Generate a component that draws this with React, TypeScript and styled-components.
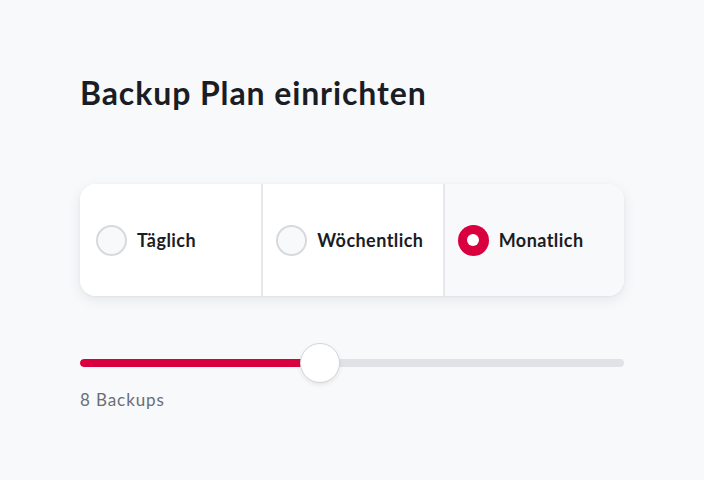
import styled, { createGlobalStyle } from "styled-components";
import { useState } from "react";

const GlobalStyle = createGlobalStyle`
  html, body {
    margin: 0;
    padding: 0;
    background: #f8f9fb;
    font-family: Lato, "Noto Sans", sans-serif;
  }
`;

const Page = styled.div`
  width: 704px;
  height: 480px;
  box-sizing: border-box;
  padding: 72px 80px 0;
  display: flex;
  flex-direction: column;
`;

const Title = styled.h1`
  margin: 0;
  font-size: 32px;
  line-height: 42px;
  font-weight: 700;
  color: #1b1d24;
  letter-spacing: 0.9px;
`;

const Options = styled.div`
  margin-top: 70px;
  height: 112px;
  display: grid;
  grid-template-columns: repeat(3, 1fr);
  background: #ffffff;
  border-radius: 16px;
  box-shadow: 0 4px 14px rgba(20, 24, 40, 0.08), 0 1px 3px rgba(20, 24, 40, 0.05);
  overflow: hidden;
`;

const Option = styled.label<{ $active: boolean; $first: boolean }>`
  display: flex;
  align-items: center;
  gap: 10px;
  padding-left: ${(p) => (p.$first ? "16px" : "13px")};
  cursor: pointer;
  background: ${(p) => (p.$active ? "#f8f9fb" : "#ffffff")};
  border-left: ${(p) => (p.$first ? "none" : "2px solid #e6e7ea")};
`;

const Radio = styled.span<{ $active: boolean }>`
  width: 31px;
  height: 31px;
  box-sizing: border-box;
  border-radius: 50%;
  flex-shrink: 0;
  display: flex;
  align-items: center;
  justify-content: center;
  background: ${(p) => (p.$active ? "#d9003f" : "#f8f9fb")};
  border: ${(p) => (p.$active ? "none" : "2px solid #d8d9dd")};
  &::after {
    content: "";
    display: ${(p) => (p.$active ? "block" : "none")};
    width: 12px;
    height: 12px;
    border-radius: 50%;
    background: #ffffff;
  }
`;

const OptionText = styled.span`
  font-size: 18px;
  font-weight: 700;
  color: #1b1d24;
  letter-spacing: 0.45px;
`;

const SliderWrap = styled.div`
  margin-top: 47px;
  position: relative;
  height: 40px;
  display: flex;
  align-items: center;
`;

const Track = styled.div`
  width: 100%;
  height: 8px;
  border-radius: 4px;
  background: #e1e2e5;
  overflow: hidden;
`;

const Fill = styled.div`
  height: 100%;
  background: #d9003f;
  border-radius: 4px;
`;

const Thumb = styled.div`
  position: absolute;
  top: 0;
  width: 40px;
  height: 40px;
  margin-left: -20px;
  box-sizing: border-box;
  border-radius: 50%;
  background: #ffffff;
  border: 1px solid #d4d5d9;
  box-shadow: 0 2px 4px rgba(0, 0, 0, 0.08);
`;

const Caption = styled.div`
  margin-top: 6px;
  font-size: 17px;
  color: #6b6e76;
  letter-spacing: 0.9px;
`;

const plans = ["Täglich", "Wöchentlich", "Monatlich"];

export default function App() {
  const [plan, setPlan] = useState("Monatlich");
  const backups = 8;
  const pct = 44.1;

  return (
    <>
      <GlobalStyle />
      <Page>
        <Title>Backup Plan einrichten</Title>
        <Options>
          {plans.map((p, i) => (
            <Option
              key={p}
              $active={plan === p}
              $first={i === 0}
              onClick={() => setPlan(p)}
            >
              <Radio $active={plan === p} />
              <OptionText>{p}</OptionText>
            </Option>
          ))}
        </Options>
        <SliderWrap>
          <Track>
            <Fill style={{ width: `${pct}%` }} />
          </Track>
          <Thumb style={{ left: `${pct}%` }} />
        </SliderWrap>
        <Caption>{backups} Backups</Caption>
      </Page>
    </>
  );
}
